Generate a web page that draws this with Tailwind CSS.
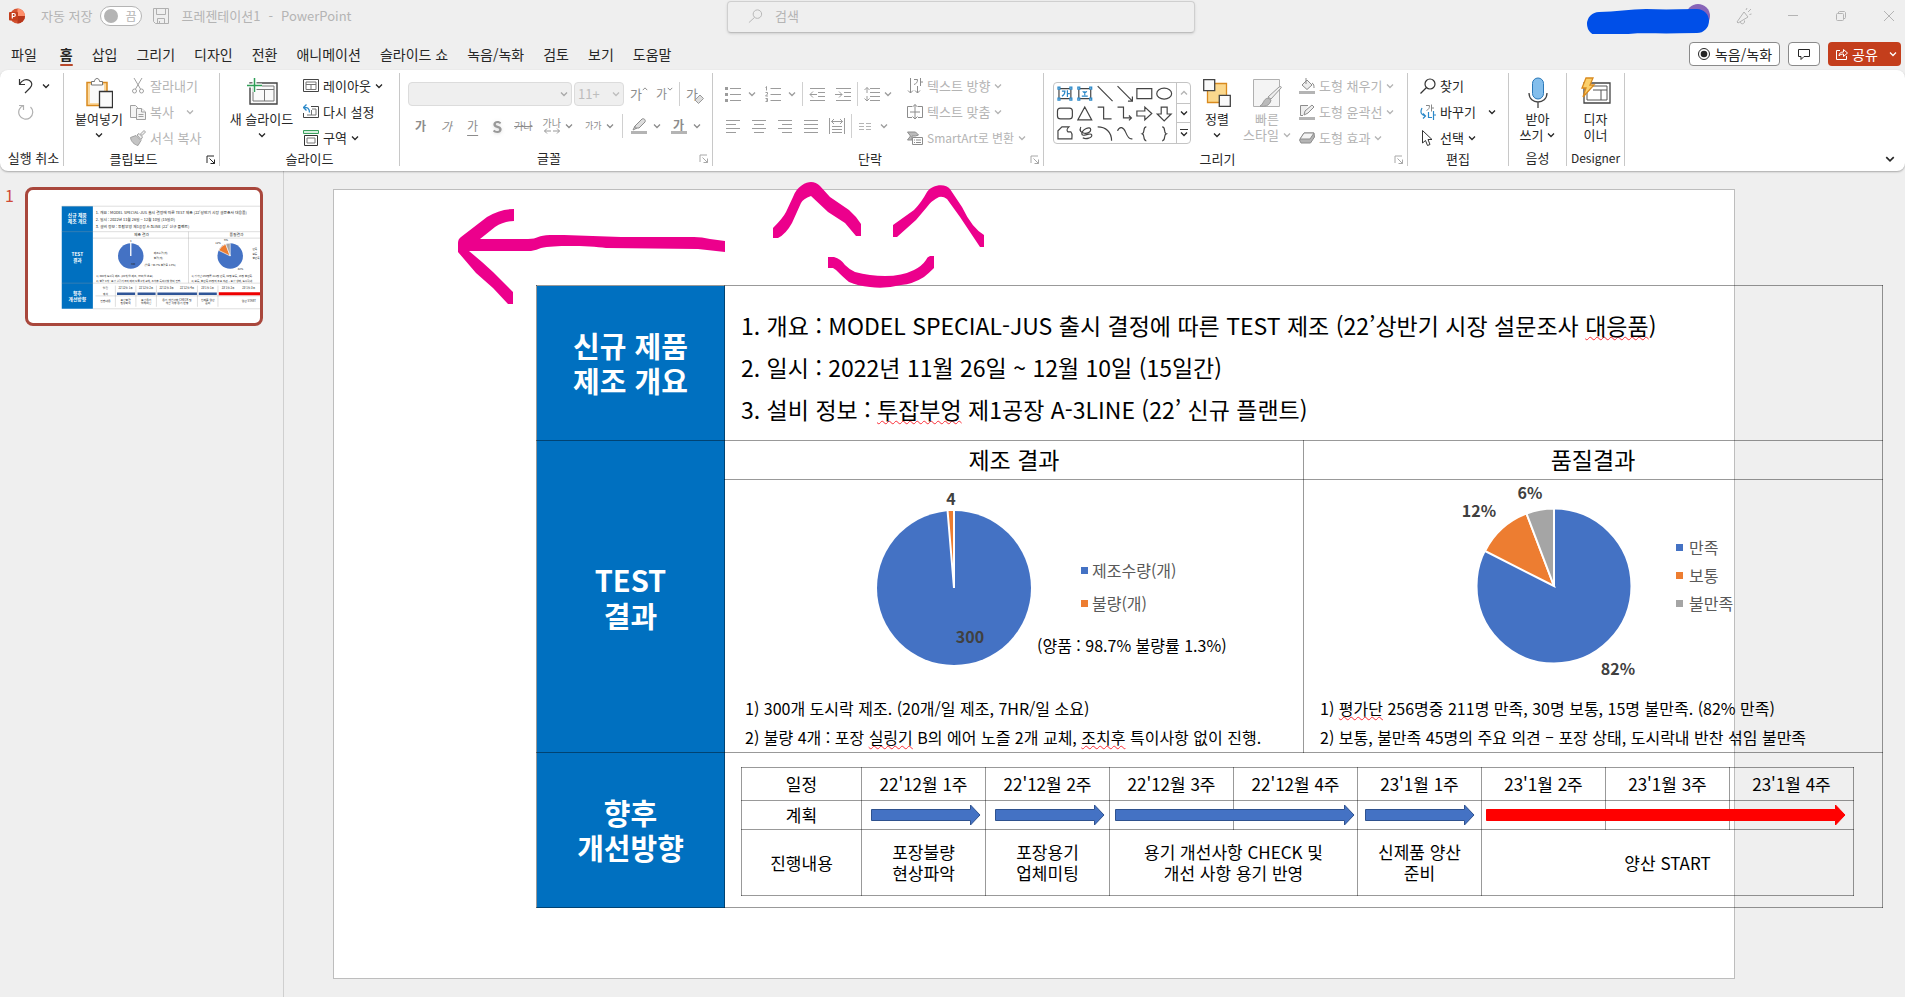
<!DOCTYPE html>
<html lang="ko">
<head>
<meta charset="utf-8">
<title>프레젠테이션1 - PowerPoint</title>
<script src="https://cdn.jsdelivr.net/npm/@tailwindcss/browser@4"></script>
</head>
<body class="flex h-screen flex-col overflow-hidden bg-[#efefef] font-['Noto_Sans_CJK_KR',sans-serif] text-[13px] leading-4 text-[#262626]">

<svg class="hidden">
  <symbol id="chev" viewBox="0 0 8 8"><path d="M1 2.500 4 5.500 7 2.500" fill="none" stroke="currentColor" stroke-width="1.300"/></symbol>
  <symbol id="launch" viewBox="0 0 10 10"><path d="M1 8V1h7M3.500 3.500 8.500 8.500M8.500 4.500v4h-4" fill="none" stroke="currentColor"/></symbol>
</svg>

<!-- Title bar -->
<header class="grid h-[34px] shrink-0 grid-cols-[727fr_468fr_710fr] text-[#b4b4b4]">
  <div class="flex h-8 items-center pl-[9px]">
    <svg class="size-4" viewBox="0 0 16 16"><circle cx="8.500" cy="8" r="7.500" fill="#d35230"/><path d="M8.500.5a7.500 7.500 0 0 1 7.500 7.500H8.500z" fill="#ff8f6b"/><path d="M8.500 15.500A7.500 7.500 0 0 0 16 8H8.500z" fill="#b7361b"/><rect y="4" width="9" height="8.500" rx="1" fill="#c43e1c"/><path d="M3.300 10.500v-5h1.500a1.500 1.500 0 0 1 0 3H3.300" fill="none" stroke="#fff" stroke-width="1.200"/></svg>
    <span class="ml-4">자동 저장</span>
    <button class="ml-2 flex h-5 w-[42px] items-center justify-between rounded-full border border-[#b4b4b4] bg-white px-[3px] text-[12px]"><i class="size-3.5 rounded-full bg-[#b4b4b4]"></i><span class="pr-0.5">끔</span></button>
    <button class="ml-[11px]" aria-label="저장"><svg class="size-4" viewBox="0 0 16 16" fill="none" stroke="#b0b0b0"><path d="M.5.5h15v15h-13l-2-2zM3.500.5v6h9v-6M4.500 15.500v-5h7v5M6.500 15v-2"/></svg></button>
    <span class="ml-3">프레젠테이션1<span class="px-2">-</span>PowerPoint</span>
  </div>
  <label class="mt-px flex h-8 items-center rounded border border-[#cfcfcf] border-b-[#bdbdbd] pl-5 pb-0.5 shadow-sm">
    <svg class="size-4" viewBox="0 0 16 16" fill="none" stroke="#b4b4b4"><circle cx="10" cy="6" r="4.500"/><path d="M7 9.500 1 15"/></svg>
    <input class="ml-3 w-full bg-transparent outline-none placeholder:text-[#b4b4b4]" placeholder="검색" aria-label="검색">
  </label>
  <div class="flex h-8 items-center justify-end">
    <svg class="-mb-1 h-8 w-[128px]" viewBox="0 0 128 32"><circle cx="114" cy="14" r="12" fill="#8764b8"/><path d="M15 22C40 22 40 19 62 19c25 1 30 0 51 0" fill="none" stroke="#004fe8" stroke-width="24" stroke-linecap="round"/></svg>
    <button class="ml-[23px]" aria-label="의견"><svg class="size-[18px]" viewBox="0 0 18 18" fill="none" stroke="#b4b4b4"><path d="M2 15 9 5l4 5-10 6zM5.500 15c0 3 5 2 4-1.500M11 3l1-2M13 5l3-3M14.500 7.500l2-.5"/></svg></button>
    <button class="ml-8" aria-label="최소화"><svg class="size-4" viewBox="0 0 16 16" stroke="#b4b4b4"><path d="M3 7.500h10"/></svg></button>
    <button class="ml-8" aria-label="이전 크기로"><svg class="size-4" viewBox="0 0 16 16" fill="none" stroke="#b4b4b4"><rect x="3.500" y="5.500" width="7" height="7" rx="1"/><path d="M5.500 5.500v-1.500l1-.5h5l1 1v5l-.5 1h-1.500"/></svg></button>
    <button class="mr-2 ml-8" aria-label="닫기"><svg class="size-4" viewBox="0 0 16 16" stroke="#b4b4b4"><path d="M3 3l10 10M13 3 3 13"/></svg></button>
  </div>
</header>

<!-- Tabs -->
<nav class="flex h-9 shrink-0 items-center pt-1 text-[14px]">
  <div class="flex flex-1 gap-[19px] pl-[11px] whitespace-nowrap">
    <a href="#">파일</a><a href="#" class="relative ml-1 font-bold">홈<i class="absolute inset-x-0 -bottom-1 h-0.5 rounded bg-[#b7472a]"></i></a><a href="#">삽입</a><a href="#">그리기</a><a href="#">디자인</a><a href="#">전환</a><a href="#">애니메이션</a><a href="#">슬라이드 쇼</a><a href="#">녹음/녹화</a><a href="#">검토</a><a href="#">보기</a><a href="#">도움말</a>
  </div>
  <div class="flex gap-2 pr-1">
    <button class="flex h-6 w-[91px] items-center justify-center gap-1 rounded border border-[#8a8a8a] bg-white"><svg class="size-3.5" viewBox="0 0 14 14"><circle cx="7" cy="7" r="5.500" fill="none" stroke="#262626"/><circle cx="7" cy="7" r="3.300" fill="#262626"/></svg>녹음/녹화</button>
    <button class="flex h-6 w-8 items-center justify-center rounded border border-[#8a8a8a] bg-white" aria-label="메모"><svg class="size-3" viewBox="0 0 12 12" fill="none" stroke="#262626"><path d="M.5 1.500h11v7H6l-3 3v-3H.5z"/></svg></button>
    <button class="flex h-6 w-[73px] items-center rounded bg-[#c43e1c] pl-2 text-white"><svg class="mr-1 size-3" viewBox="0 0 12 12" fill="none" stroke="#fff"><path d="M4 2.500H.5v9h10V8M3 8c0-3 2-4 4.500-4V1.500L11.500 5 7.500 8.500V6C5.500 6 4 6.500 3 8z"/></svg>공유<svg class="ml-auto mr-1 size-2"><use href="#chev"/></svg></button>
  </div>
</nav>

<!-- Ribbon -->
<section class="z-10 flex h-[101px] shrink-0 rounded-lg bg-white py-[3px] whitespace-nowrap shadow-[0_1px_2px_rgba(0,0,0,0.3)]">

  <div class="mb-0.5 flex w-16 flex-col border-r border-[#c8c8c8]">
    <div class="flex h-[79px] flex-col pl-[18px]">
      <div class="flex h-[26px] items-center gap-2"><button aria-label="실행 취소"><svg class="size-4" viewBox="0 0 16 16" fill="none" stroke="#333" stroke-width="1.200"><path d="M1.500 1v5.500H7M1.500 6.500C4 2 8 .5 11.500 2.500c3 2 3 5 .5 7.500l-5 5"/></svg></button><svg class="size-2"><use href="#chev"/></svg></div>
      <button class="flex h-[26px] items-center" aria-label="다시 실행"><svg class="size-4" viewBox="0 0 16 16" fill="none" stroke="#b0b0b0" stroke-width="1.200"><path d="M1 1.500h4.500V6M5.500 1.500A7 7 0 1 0 12.500 3"/></svg></button>
    </div>
    <p class="pl-1 text-center">실행 취소</p>
  </div>

  <div class="mb-0.5 flex w-[156px] flex-col border-r border-[#c8c8c8]">
    <div class="flex h-[79px]">
      <button class="flex w-[66px] flex-col items-center pt-1 pl-1"><svg class="h-8 w-7" viewBox="0 0 28 32" fill="none"><path d="M2 5.500h20v23H2z" fill="#fbd9a0" stroke="#d98a1e" stroke-width="1.500"/><path d="M5 8h14v18H5z" fill="#fafafa"/><path d="M6.500 8V4.500h3c0-4 5-4 5 0h3V8z" fill="#fff" stroke="#767676"/><path d="M14.500 14.500h13v16h-13z" fill="#fafafa" stroke="#333" stroke-width="1.300"/></svg><span class="mt-0.5">붙여넣기</span><svg class="mt-1 size-2"><use href="#chev"/></svg></button>
      <div class="flex flex-col text-[#b4b4b4]">
        <button class="flex h-[26px] items-center gap-1"><svg class="size-4" viewBox="0 0 16 16" fill="none" stroke="#a0a0a0"><path d="M4 0l6.500 11M12 0 5.500 11"/><circle cx="4.500" cy="13" r="2"/><circle cx="11.500" cy="13" r="2"/></svg>잘라내기</button>
        <button class="flex h-[26px] items-center gap-1"><svg class="size-4" viewBox="0 0 16 16" fill="#f4f4f4" stroke="#a0a0a0"><path d="M.5 1.500h5l2 2v10h-7z"/><path d="M6.500 4.500h5l4 3.500v7.500h-9z"/><path d="M11.500 4.500V8h4M8.500 10.500h5M8.500 12.500h5"/></svg>복사<svg class="ml-2 size-2"><use href="#chev"/></svg></button>
        <button class="flex h-[26px] items-center gap-1"><svg class="size-4" viewBox="0 0 16 16" fill="#c4c4c4" stroke="#a0a0a0"><path d="M.5 7.500 6 5.500l5 5-3 5c-4-1-7-4-7.500-8z"/><path d="M7 5l2-1.500 3.500 3.500-1.500 2.500zM10.500 4 14 .5 15.500 2 12 5.500z" fill="#eee"/></svg>서식 복사</button>
      </div>
    </div>
    <p class="relative pr-4 text-center">클립보드<svg class="absolute top-1 right-[3px] size-2.5"><use href="#launch"/></svg></p>
  </div>

  <div class="mb-0.5 flex w-[180px] flex-col border-r border-[#c8c8c8]">
    <div class="flex h-[79px]">
      <button class="flex w-[83px] flex-col items-center pt-1"><svg class="h-8 w-8" viewBox="0 0 32 32" fill="none"><path d="M4 6h27v21H4z" stroke="#444" stroke-width="1.400" fill="#fafafa"/><path d="M7 12.500h21M7 9h21v15H7zM18.500 12.500V24" stroke="#777"/><path d="M8.500 1v14M1 8.500h15" stroke="#fff" stroke-width="4"/><path d="M8.500 1v14M1 8.500h15" stroke="#2f9e57" stroke-width="1.500"/></svg><span class="mt-0.5">새 슬라이드</span><svg class="mt-1 size-2"><use href="#chev"/></svg></button>
      <div class="flex flex-col">
        <button class="flex h-[26px] items-center gap-1"><svg class="size-4" viewBox="0 0 16 16" fill="none" stroke="#444"><path d="M.5 1.500h15v12H.5z"/><path d="M3 4h10v7.500H3zM3 6.500h10M8 6.500v5" stroke="#777"/></svg>레이아웃<svg class="size-2"><use href="#chev"/></svg></button>
        <button class="flex h-[26px] items-center gap-1"><svg class="size-4" viewBox="0 0 16 16" fill="none" stroke="#444"><path d="M8 2.500h7.500v11H.5V9"/><path d="M9 5h4v6H4M8.500 6v5" stroke="#777"/><path d="M3.500.5.500 3.500l3 3M.5 3.500c4-.5 6 1 6 5" stroke="#2b88c8" stroke-width="1.300"/></svg>다시 설정</button>
        <button class="flex h-[26px] items-center gap-1"><svg class="size-4" viewBox="0 0 16 16" fill="none"><path d="M.5.5h15v3H.5z" stroke="#3aa05e" fill="#d8f0df"/><path d="M1.500 5.500h13v10h-13z" stroke="#333"/><path d="M4 8h8v5H4z" stroke="#777"/></svg>구역<svg class="size-2"><use href="#chev"/></svg></button>
      </div>
    </div>
    <p class="text-center">슬라이드</p>
  </div>

  <div class="mb-0.5 flex w-[313px] flex-col border-r border-[#c8c8c8]">
    <div class="flex h-[79px] flex-col gap-2 pt-[9px] pl-2 text-[#a8a8a8]">
      <div class="flex h-6 items-center">
        <button class="flex h-6 w-[164px] items-center justify-end rounded border border-[#dcdcdc] bg-[#efefef] pr-[3px]" aria-label="글꼴"><svg class="size-2"><use href="#chev"/></svg></button>
        <button class="ml-0.5 flex h-6 w-[50px] items-center justify-between rounded border border-[#dcdcdc] bg-[#efefef] px-[3px] text-[#bdbdbd]">11+<svg class="size-2"><use href="#chev"/></svg></button>
        <button class="ml-1.5 flex items-start text-[13px] text-[#8c8c8c]">가<svg class="size-1.5 rotate-180"><use href="#chev"/></svg></button>
        <button class="ml-2 flex items-start text-[12px] text-[#8c8c8c]">가<svg class="size-1.5"><use href="#chev"/></svg></button>
        <i class="mx-1.5 h-6 w-px bg-[#d0d0d0]"></i>
        <button class="relative text-[13px] text-[#8c8c8c]">가<svg class="absolute top-2 left-2 size-2.5" viewBox="0 0 10 10"><path d="M1 6 6 1l3.500 3.500-5 5z" fill="#ddd" stroke="#999"/></svg></button>
      </div>
      <div class="flex h-6 items-center text-[12px] text-[#8c8c8c]">
        <button class="ml-[7px] font-bold">가</button>
        <button class="ml-[15px] italic">가</button>
        <button class="ml-[15px] underline underline-offset-4">가</button>
        <button class="ml-3.5 text-[16px] font-bold text-[#999] drop-shadow">S</button>
        <button class="ml-3 text-[10px] line-through">가나</button>
        <button class="ml-2.5 flex flex-col items-center text-[10px] leading-[10px]">가나<svg class="h-1.5 w-4" viewBox="0 0 16 6" fill="none" stroke="#999"><path d="M3 .5.500 3 3 5.500M.5 3H7M13 .5l2.500 2.500L13 5.500M15.500 3H9"/></svg></button>
        <svg class="ml-1 size-2"><use href="#chev"/></svg>
        <button class="ml-3 text-[9px]">가가</button>
        <svg class="ml-1 size-2"><use href="#chev"/></svg>
        <i class="mx-2 h-6 w-px bg-[#d0d0d0]"></i>
        <button aria-label="강조 색"><svg class="size-4" viewBox="0 0 16 16"><path d="M0 13h16v3H0z" fill="#b4b4b4"/><path d="M4 8 11 1c2-1 4 1 3 3L8 10H4zM4 8l-2 4 4-2" fill="#ddd" stroke="#8c8c8c"/></svg></button>
        <svg class="ml-1.5 size-2"><use href="#chev"/></svg>
        <button class="ml-2.5 w-4 border-b-[3px] border-[#b4b4b4] leading-[13px] font-bold">가</button>
        <svg class="ml-1.5 size-2"><use href="#chev"/></svg>
      </div>
    </div>
    <p class="relative pr-3.5 text-center">글꼴<svg class="absolute top-1 right-[3px] size-2.5 text-[#a8a8a8]"><use href="#launch"/></svg></p>
  </div>

  <div class="mb-0.5 flex w-[331px] flex-col border-r border-[#c8c8c8]">
    <div class="flex h-[79px] text-[#9c9c9c]">
      <div class="flex w-[194px] flex-col gap-2 pt-[9px] pl-3">
        <div class="flex h-6 items-center">
          <button aria-label="글머리 기호"><svg class="size-4" viewBox="0 0 16 16" stroke="currentColor"><path d="M5 2.500h11M5 8.500h11M5 14.500h11"/><path d="M0 2.500h3M0 8.500h3M0 14.500h3" stroke-width="3"/></svg></button>
          <svg class="ml-[7px] size-2"><use href="#chev"/></svg>
          <button class="ml-[9px]" aria-label="번호 매기기"><svg class="size-4" viewBox="0 0 16 16" fill="none" stroke="currentColor"><path d="M5.500 2.500H16M5.500 8.500H16M5.500 14.500H16M.5 1.500l1-1v4M.5 6.500h2v1.500l-2 2h2.500M.5 12.500h2v3H.5M1 14h1"/></svg></button>
          <svg class="ml-[7px] size-2"><use href="#chev"/></svg>
          <i class="mx-1.5 h-6 w-px bg-[#d0d0d0]"></i>
          <button aria-label="내어쓰기"><svg class="size-4" viewBox="0 0 16 16" fill="none" stroke="currentColor"><path d="M1 2.500h15M9 6.500h7M9 10.500h7M1 14.500h15M4 5.500l-3 3 3 3M1 8.500h7"/></svg></button>
          <button class="ml-2.5" aria-label="들여쓰기"><svg class="size-4" viewBox="0 0 16 16" fill="none" stroke="currentColor"><path d="M1 2.500h15M9 6.500h7M9 10.500h7M1 14.500h15M4 5.500l3 3-3 3M0 8.500h7"/></svg></button>
          <i class="mx-1.5 h-6 w-px bg-[#d0d0d0]"></i>
          <button aria-label="줄 간격"><svg class="size-4" viewBox="0 0 16 16" fill="none" stroke="currentColor"><path d="M6 2.500h10M6 6.500h10M6 10.500h10M6 14.500h10M.5 4 3 1.500 5.500 4M3 1.500V7M.5 12.500 3 15l2.500-2.500M3 15v-5"/></svg></button>
          <svg class="ml-1 size-2"><use href="#chev"/></svg>
        </div>
        <div class="flex h-6 items-center">
          <button aria-label="왼쪽 맞춤"><svg class="size-4" viewBox="0 0 16 16" stroke="currentColor"><path d="M1 2.500h14M1 6.500h10M1 10.500h14M1 14.500h10"/></svg></button>
          <button class="ml-2.5" aria-label="가운데 맞춤"><svg class="size-4" viewBox="0 0 16 16" stroke="currentColor"><path d="M1 2.500h14M3 6.500h10M1 10.500h14M3 14.500h10"/></svg></button>
          <button class="ml-2.5" aria-label="오른쪽 맞춤"><svg class="size-4" viewBox="0 0 16 16" stroke="currentColor"><path d="M1 2.500h14M5 6.500h10M1 10.500h14M5 14.500h10"/></svg></button>
          <button class="ml-2.5" aria-label="양쪽 맞춤"><svg class="size-4" viewBox="0 0 16 16" stroke="currentColor"><path d="M1 2.500h14M1 6.500h14M1 10.500h14M1 14.500h14"/></svg></button>
          <button class="ml-2.5" aria-label="균등 분할"><svg class="size-4" viewBox="0 0 16 16" fill="none" stroke="currentColor"><path d="M.5 0v16M15.500 0v16M3 8.500h10M3 11.500h10M3 14.500h10M5 1 2.500 3.500 5 6M11 1l2.500 2.500L11 6M2.500 3.500h11"/></svg></button>
          <i class="mx-1.5 h-6 w-px bg-[#d0d0d0]"></i>
          <button aria-label="열"><svg class="h-4 w-3.5" viewBox="0 0 14 16" stroke="#b4b4b4"><path d="M1 5.500h5M8 5.500h5M1 8.500h5M8 8.500h5M1 11.500h5M8 11.500h5"/></svg></button>
          <svg class="ml-2 size-2"><use href="#chev"/></svg>
        </div>
      </div>
      <div class="flex flex-col text-[#b4b4b4]">
        <button class="flex h-[26px] items-center gap-1"><svg class="size-4 text-[#8c8c8c]" viewBox="0 0 16 16" fill="none" stroke="currentColor"><path d="M3.500 0v15M1 12.500 3.500 15 6 12.500M10.500 8v7M8 12.500l2.500 2.500 2.500-2.500M7 1.500h3.500c0 3-1 4-3.500 5M13.500 0v8M13.500 4H16"/></svg>텍스트 방향<svg class="size-2"><use href="#chev"/></svg></button>
        <button class="flex h-[26px] items-center gap-1"><svg class="size-4 text-[#8c8c8c]" viewBox="0 0 16 16" fill="none" stroke="currentColor"><path d="M5 2.500H.5v11H5M11 2.500h4.500v11H11M3 8h10M8 .5V15M5.500 3 8 .5 10.500 3M5.500 12.500 8 15l2.500-2.500"/></svg>텍스트 맞춤<svg class="size-2"><use href="#chev"/></svg></button>
        <button class="flex h-[26px] items-center gap-1"><svg class="size-4 text-[#8c8c8c]" viewBox="0 0 16 16"><path d="M.5 2h8l3 3-3 1H5v4H.5L3.500 6z" fill="#bbb" stroke="currentColor"/><path d="M5.500 7.500h10v7h-10z" fill="#fff" stroke="currentColor"/><path d="M7 10h1M9 10h5M7 12.500h1M9 12.500h5" stroke="currentColor"/></svg><span class="text-[12px]">SmartArt로 변환</span><svg class="size-2"><use href="#chev"/></svg></button>
      </div>
    </div>
    <p class="relative pr-4 text-center">단락<svg class="absolute top-1 right-[3px] size-2.5 text-[#a8a8a8]"><use href="#launch"/></svg></p>
  </div>

  <div class="mb-0.5 flex w-[364px] flex-col border-r border-[#c8c8c8]">
    <div class="flex h-[79px]">
      <div class="mt-[9px] ml-[9px] flex h-[62px] w-[138px] rounded border border-[#c4c4c4]">
        <svg class="h-[60px] w-[123px]" viewBox="0 0 123 60" fill="none" stroke="#444" stroke-width="1.200">
          <g stroke="#2b88c8"><path d="M5 5.500h12M5 15.500h12M5 5.500v10M17 5.500v10M25 5.500h12M25 15.500h12M25 5.500v10M37 5.500v10" stroke="#444"/><path d="M4 4h2v2H4zM16 4h2v2h-2zM4 15h2v2H4zM16 15h2v2h-2zM24 4h2v2h-2zM36 4h2v2h-2zM24 15h2v2h-2zM36 15h2v2h-2z" fill="#fff"/><path d="M8 8h3c0 3-1 4-3 5M13.500 7v7M13.500 10.500H16M28 13h6M31 8v4M29 8c1 2 3 2 4 0"/></g>
          <path d="M44 3l15 15M64 3l15 15M79 13.500V18h-4.500M83.500 5.500h15v10h-15z"/><ellipse cx="111" cy="10.500" rx="7.500" ry="5.500"/>
          <rect x="3.500" y="25" width="15" height="11" rx="3"/><path d="M31 24l7 13H24zM44 24h6v12h8M64 24h6v11h8M75.500 32.500 78 35l-2.500 2.500M83.500 28h8v-4l7 6.500-7 6.500v-4h-8zM108 24v7h-4l7 7 7-7h-4v-7z"/>
          <path d="M4 56V48l4-4h7c-3 3-2 4-1 5h3c2 2 1 4 1 7zM27 44c-4 8 10 8 10 3s-9 0-9 4 9-2 10 1-6 5-9 3M44 44c8 0 14 5 14 14M64 48c2-5 6-4 8 1s4 8 7 7M93 44c-4 0-1 6-4 7 3 1 0 7 4 7M109 44c4 0 1 6 4 7-3 1 0 7-4 7"/>
        </svg>
        <div class="flex w-[14px] flex-col border-l border-[#c4c4c4]"><button class="flex h-5 items-center justify-center text-[#b4b4b4]" aria-label="위로"><svg class="size-2 rotate-180"><use href="#chev"/></svg></button><button class="flex h-5 items-center justify-center border-y border-[#c4c4c4]" aria-label="아래로"><svg class="size-2"><use href="#chev"/></svg></button><button class="flex h-5 flex-col items-center justify-center" aria-label="자세히"><i class="h-px w-2 bg-[#333]"></i><svg class="size-2"><use href="#chev"/></svg></button></div>
      </div>
      <button class="ml-2 flex w-9 flex-col items-center pt-1.5"><svg class="h-7 w-7" viewBox="0 0 28 28" stroke-width="1.300"><path d="M4.500 4.500h19v19h-19z" fill="#fbd88d" stroke="#d98a1e"/><path d="M.7.7h11v11H.7zM16.300 16.300h11v11h-11z" fill="#fafafa" stroke="#444"/></svg><span class="mt-1">정렬</span><svg class="mt-1 size-2"><use href="#chev"/></svg></button>
      <button class="ml-1.5 flex w-[52px] flex-col items-center pt-1.5 text-[#b4b4b4]"><svg class="h-7 w-8" viewBox="0 0 32 28"><path d="M2.500.5h26v27h-26z" fill="#f4f4f4" stroke="#b0b0b0"/><path d="M30 9 20 20l-3-2L28 8c2-1 3 0 2 1z" fill="#eee" stroke="#999"/><path d="M9 27c4 1 10 0 11-6l-3-2c-5 1-4 6-8 8z" fill="#bbb" stroke="#999"/></svg><span class="mt-1">빠른</span><span class="flex items-center gap-1">스타일<svg class="size-2"><use href="#chev"/></svg></span></button>
      <div class="ml-1.5 flex flex-col text-[#b4b4b4]">
        <button class="flex h-[26px] items-center gap-1"><svg class="size-4" viewBox="0 0 16 16"><path d="M0 13h16v3H0z" fill="#b4b4b4"/><path d="M3 7l5-5 5 5-5 4.500zM7 0v6M13 5c2 1 2 3 2 5" fill="#eee" stroke="#8c8c8c"/></svg>도형 채우기<svg class="size-2"><use href="#chev"/></svg></button>
        <button class="flex h-[26px] items-center gap-1"><svg class="size-4" viewBox="0 0 16 16"><path d="M0 13h16v3H0z" fill="#b4b4b4"/><path d="M9 1.500H1.500v10H4M5 11l1-4 7-6 2 2-6 6z" fill="#eee" stroke="#8c8c8c"/></svg>도형 윤곽선<svg class="size-2"><use href="#chev"/></svg></button>
        <button class="flex h-[26px] items-center gap-1"><svg class="size-4" viewBox="0 0 16 16"><path d="M5 3h10l.5 4-4 6H2L.5 10z" fill="#b4b4b4" stroke="#8c8c8c"/><path d="M5 3h10l-4 6H1z" fill="#f4f4f4" stroke="#8c8c8c"/></svg>도형 효과<svg class="size-2"><use href="#chev"/></svg></button>
      </div>
    </div>
    <p class="relative pr-4 text-center">그리기<svg class="absolute top-1 right-[3px] size-2.5 text-[#a8a8a8]"><use href="#launch"/></svg></p>
  </div>

  <div class="mb-0.5 flex w-[101px] flex-col border-r border-[#c8c8c8]">
    <div class="flex h-[79px] flex-col pl-3">
      <button class="flex h-[26px] items-center gap-1"><svg class="size-4" viewBox="0 0 16 16" fill="none" stroke="#333" stroke-width="1.200"><circle cx="10" cy="6" r="5"/><path d="M6.500 9.500.5 15.500"/></svg>찾기</button>
      <button class="flex h-[26px] items-center gap-1"><svg class="size-4" viewBox="0 0 16 16" fill="none"><path d="M6 1.500h3.500c0 3-1 4-3 5M11.500.5v7M11.500 4H14" stroke="#888"/><path d="M2 4C0 8 1 11 5 12M3 9.500 5.500 12 3 14.500M8.500 8v5.500H12M13.500 7v9M13.500 11H16" stroke="#2b88c8" stroke-width="1.200"/></svg>바꾸기<svg class="ml-2 size-2"><use href="#chev"/></svg></button>
      <button class="flex h-[26px] items-center gap-1"><svg class="size-4" viewBox="0 0 16 16" fill="none" stroke="#333"><path d="M2.500.5v12.500l3-2.500 2 5 2.500-1-2-5h4z"/></svg>선택<svg class="size-2"><use href="#chev"/></svg></button>
    </div>
    <p class="text-center">편집</p>
  </div>

  <div class="mb-0.5 flex w-[58px] flex-col border-r border-[#c8c8c8]">
    <button class="flex h-[79px] flex-col items-center pt-1"><svg class="h-8 w-5" viewBox="0 0 20 32" fill="none"><rect x="4.500" y="1" width="11" height="21" rx="5.500" fill="#83beec" stroke="#2b78b8"/><path d="M1 16c0 12 18 12 18 0M10 25v6" stroke="#444" stroke-width="1.300"/></svg><span class="mt-0.5">받아</span><span class="flex items-center gap-1">쓰기<svg class="size-2"><use href="#chev"/></svg></span></button>
    <p class="text-center">음성</p>
  </div>

  <div class="mb-0.5 flex w-[58px] flex-col border-r border-[#c8c8c8]">
    <button class="flex h-[79px] flex-col items-center pt-1"><svg class="h-8 w-8" viewBox="0 0 32 32" fill="none"><path d="M4 6h26v20H4z" stroke="#444" stroke-width="1.300"/><path d="M7 9h20v14H7zM13 13h14M21 13v10" stroke="#555"/><path d="M6 1h7l-3 7h4L3 20l3-9H2z" fill="#fbd06c" stroke="#d98a1e" stroke-width="1.300"/></svg><span class="mt-0.5">디자</span><span>이너</span></button>
    <p class="text-center text-[12px]">Designer</p>
  </div>
  <button class="mr-2.5 mb-1 ml-auto self-end" aria-label="리본 축소"><svg class="size-2.5"><use href="#chev"/></svg></button>
</section>

<main class="flex min-h-0 flex-1">
  <!-- Slide list -->
  <aside class="flex w-[284px] shrink-0 items-start border-r border-[#cfcfcf] pt-4 pl-[5px]">
    <span class="w-5 text-[16px] text-[#d04a35]">1</span>
    <svg class="h-[139px] w-[238px] rounded-lg border-[3px] border-[#a9473c] bg-white" viewBox="0 0 1402 800" font-size="23" fill="#222">
      <path d="M204 96h188v620H204z" fill="#0070c0"/>
      <path d="M204 96h1200M204 250h1200M392 289h1012M204 561h1200M392 716h1012M970 250v311M408 638h1000M528 576v128M652 576v128M776 576v128M1024 576v128M1148 576v128" stroke="#999" stroke-width="2"/>
      <g fill="#fff" font-size="29" font-weight="700" text-anchor="middle"><text x="298" y="164">신규 제품</text><text x="298" y="198">제조 개요</text><text x="298" y="398">TEST</text><text x="298" y="434">결과</text><text x="298" y="632">향후</text><text x="298" y="668">개선방향</text></g>
      <text x="409" y="144">1. 개요 : MODEL SPECIAL-JUS 출시 결정에 따른 TEST 제조 (22’상반기 시장 설문조사 대응품)</text><text x="409" y="186">2. 일시 : 2022년 11월 26일 ~ 12월 10일 (15일간)</text><text x="409" y="228">3. 설비 정보 : 투잡부엉 제1공장 A-3LINE (22’ 신규 플랜트)</text>
      <text x="640" y="278">제조 결과</text><text x="1218" y="278">품질결과</text>
      <circle cx="621" cy="397" r="77" fill="#4472c4"/><path d="M621 397v-80" stroke="#fff" stroke-width="8"/><circle cx="1222" cy="397" r="77" fill="#4472c4"/><path d="M1222 397 1153 363A77 77 0 0 1 1195 325z" fill="#ed7d31" stroke="#fff" stroke-width="4"/><path d="M1222 397 1195 325A77 77 0 0 1 1222 320z" fill="#a5a5a5" stroke="#fff" stroke-width="4"/>
      <g font-size="16"><text x="617" y="315">4</text><text x="622" y="452">300</text><text x="760" y="386">제조수량(개)</text><text x="760" y="418">불량(개)</text><text x="704" y="460">(양품 : 98.7% 불량률 1.3%)</text><text x="413" y="523">1) 300개 도시락 제조. (20개/일 제조, 7HR/일 소요)</text><text x="413" y="552">2) 불량 4개 : 포장 실링기 B의 에어 노즐 2개 교체, 조치후 특이사항 없이 진행.</text><text x="1132" y="326">12%</text><text x="1184" y="308">6%</text><text x="1268" y="484">82%</text><text x="1356" y="363">만족</text><text x="1356" y="391">보통</text><text x="1356" y="418">불만족</text><text x="988" y="523">1) 평가단 256명중 211명 만족, 30명 보통, 15명 불만족.</text><text x="988" y="552">2) 보통, 불만족 45명의 주요 의견 – 포장 상태, 도시락내</text></g>
      <g font-size="17" text-anchor="middle"><text x="468" y="598">일정</text><text x="590" y="598">22'12월 1주</text><text x="714" y="598">22'12월 2주</text><text x="838" y="598">22'12월 3주</text><text x="962" y="598">22'12월 4주</text><text x="1086" y="598">23'1월 1주</text><text x="1210" y="598">23'1월 2주</text><text x="1334" y="598">23'1월 3주</text><text x="468" y="630">계획</text><text x="468" y="678">진행내용</text><text x="590" y="668">포장불량</text><text x="590" y="690">현상파악</text><text x="714" y="668">포장용기</text><text x="714" y="690">업체미팅</text><text x="900" y="668">용기 개선사항 CHECK 및</text><text x="900" y="690">개선 사항 용기 반영</text><text x="1086" y="668">신제품 양산</text><text x="1086" y="690">준비</text><text x="1334" y="678">양산 START</text></g>
      <path d="M538 625h109M662 625h109M782 625h239M1032 625h109" stroke="#2f5597" stroke-width="16"/><path d="M1153 625h250" stroke="#e00" stroke-width="18"/>
    </svg>
  </aside>

  <!-- Slide canvas -->
  <section class="relative flex-1 overflow-hidden text-black">
    <div class="absolute top-[18px] left-[49px] h-[790px] w-[1402px] border border-[#bdbdbd] bg-white"></div>

    <table class="absolute top-[114px] left-[252px] w-[1346px] table-fixed border-collapse">
      <colgroup><col class="w-[188px]"><col class="w-[579px]"><col class="w-[579px]"></colgroup>
      <tbody>
      <tr class="h-[155px]">
        <th class="border border-black/40 bg-[#0070c0] text-[29px] leading-[35px] text-white">신규 제품<br>제조 개요</th>
        <td colspan="2" class="border border-black/40 pt-2 pl-4 text-[23px] leading-[42px]">
          <p>1. 개요 : MODEL SPECIAL-JUS 출시 결정에 따른 TEST 제조 (22’상반기 시장 설문조사 <span class="underline decoration-red-500 decoration-wavy decoration-1">대응품</span>)</p>
          <p>2. 일시 : 2022년 11월 26일 ~ 12월 10일 (15일간)</p>
          <p>3. 설비 정보 : <span class="underline decoration-red-500 decoration-wavy decoration-1">투잡부엉</span> 제1공장 A-3LINE (22’ 신규 플랜트)</p>
        </td>
      </tr>
      <tr class="h-[39px] text-[23px] leading-8">
        <th rowspan="2" class="border border-black/40 bg-[#0070c0] text-[29px] leading-[36px] text-white">TEST<br>결과</th>
        <td class="border border-black/40 pb-0.5 text-center">제조 결과</td>
        <td class="border border-black/40 pb-0.5 text-center">품질결과</td>
      </tr>
      <tr class="h-[273px]">
        <td class="border border-black/40 align-top">
          <figure class="relative flex h-[214px] text-[16px]">
            <svg class="h-[213px] w-[356px] shrink-0" viewBox="0 0 356 213" font-size="16" font-weight="700" fill="#404040" text-anchor="middle">
              <circle cx="229" cy="108" r="77" fill="#4472c4"/>
              <path d="M229 108 222.500 30h6.500z" fill="#ed7d31" stroke="#fff" stroke-width="2"/>
              <text x="226" y="25">4</text><text x="245" y="163">300</text>
            </svg>
            <ul class="pt-[74px] leading-[33px] text-[#595959]">
              <li class="flex items-center gap-1"><i class="size-[7px] bg-[#4472c4]"></i>제조수량(개)</li>
              <li class="flex items-center gap-1"><i class="size-[7px] bg-[#ed7d31]"></i>불량(개)</li>
            </ul>
            <figcaption class="absolute top-[153px] left-[312px] leading-6">(양품 : 98.7% 불량률 1.3%)</figcaption>
          </figure>
          <div class="pl-5 text-[16px] leading-[29px]">
            <p>1) 300개 도시락 제조. (20개/일 제조, 7HR/일 소요)</p>
            <p>2) 불량 4개 : 포장 <span class="underline decoration-red-500 decoration-wavy decoration-1">실링기</span> B의 에어 노즐 2개 교체, <span class="underline decoration-red-500 decoration-wavy decoration-1">조치후</span> 특이사항 없이 진행.</p>
          </div>
        </td>
        <td class="border border-black/40 align-top">
          <figure class="flex h-[214px] text-[16px]">
            <svg class="h-[213px] w-[372px] shrink-0" viewBox="0 0 372 213" font-size="16" font-weight="700" fill="#404040" text-anchor="middle">
              <g stroke="#fff" stroke-width="2"><circle cx="250" cy="106" r="77.500" fill="#4472c4"/>
              <path d="M250 106 181 71A77.500 77.500 0 0 1 222.500 33.500z" fill="#ed7d31"/>
              <path d="M250 106 222.500 33.500A77.500 77.500 0 0 1 250 28.500z" fill="#a5a5a5"/></g>
              <text x="175" y="37">12%</text><text x="226" y="19">6%</text><text x="314" y="195">82%</text>
            </svg>
            <ul class="pt-[53px] leading-7 text-[#595959]">
              <li class="flex items-center gap-1.5"><i class="size-[7px] bg-[#4472c4]"></i>만족</li>
              <li class="flex items-center gap-1.5"><i class="size-[7px] bg-[#ed7d31]"></i>보통</li>
              <li class="flex items-center gap-1.5"><i class="size-[7px] bg-[#a5a5a5]"></i>불만족</li>
            </ul>
          </figure>
          <div class="pl-4 text-[16px] leading-[29px]">
            <p>1) <span class="underline decoration-red-500 decoration-wavy decoration-1">평가단</span> 256명중 211명 만족, 30명 보통, 15명 불만족. (82% 만족)</p>
            <p>2) 보통, 불만족 45명의 주요 의견 – 포장 상태, 도시락내 반찬 섞임 불만족</p>
          </div>
        </td>
      </tr>
      <tr class="h-[155px]">
        <th class="border border-black/40 bg-[#0070c0] text-[29px] leading-[35px] text-white">향후<br>개선방향</th>
        <td colspan="2" class="border border-black/40 pt-0.5 pl-4">
          <div class="relative w-[1113px]">
            <table class="w-full table-fixed border-collapse text-center text-[17px] leading-[21px] [&_td]:border [&_td]:border-black/40 [&_th]:border [&_th]:border-black/40 [&_th]:font-normal">
              <colgroup><col class="w-[120px]"></colgroup>
              <tr class="h-[33px]"><th>일정</th><th>22'12월 1주</th><th>22'12월 2주</th><th>22'12월 3주</th><th>22'12월 4주</th><th>23'1월 1주</th><th>23'1월 2주</th><th>23'1월 3주</th><th>23'1월 4주</th></tr>
              <tr class="h-[29px]"><th>계획</th><td></td><td></td><td></td><td></td><td></td><td></td><td></td><td></td></tr>
              <tr class="h-[66px]"><th>진행내용</th><td>포장불량<br>현상파악</td><td>포장용기<br>업체미팅</td><td colspan="2">용기 개선사항 CHECK 및<br>개선 사항 용기 반영</td><td>신제품 양산<br>준비</td><td colspan="3">양산 START</td></tr>
            </table>
            <svg class="absolute inset-0 h-[128px] w-[1113px]" viewBox="0 0 1113 128" fill="#4472c4" stroke="#2f528f">
              <path d="M130.500 42.500h99v-4.500l9.500 10-9.500 10v-4.500h-99zM254.500 42.500h99v-4.500l9.500 10-9.500 10v-4.500h-99zM374.500 42.500h229v-4.500l9.500 10-9.500 10v-4.500h-229zM624.500 42.500h99v-4.500l9.500 10-9.500 10v-4.500h-99z"/>
              <path d="M745.500 42.500h349v-4.500l9.500 10-9.500 10v-4.500h-349z" fill="red" stroke="red"/>
            </svg>
          </div>
        </td>
      </tr>
      </tbody>
    </table>

    <!-- Ink strokes -->
    <svg class="pointer-events-none absolute top-0 left-0 h-[150px] w-[760px]" viewBox="284 171 760 150" fill="#ec008c">
      <path d="M514 209Q500 209 487 217L461 237Q458 239 458 243V252L476 273 493 288 508 304H513V292L493 272 482 262 469 251H531Q537 250 541 248C556 245 590 246 606 248L698 249 725 252V241L710 239Q702 237 694 237H621L564 235H550C538 235 538 239 528 239H480L495 227Q504 221 514 221z"/>
      <path d="M773 228Q783 218 786 212L793 197C797 186 806 182 811 182Q816 182 820 186L830 197 849 210Q856 216 861 224V236H856L845 223 828 212 811 196Q803 199 801 203L792 223Q786 234 778 238H773z"/>
      <path d="M893 225 914 210Q921 203 927 192C932 184 946 183 950 189L962 207Q972 228 984 235V247H980L960 217 947 199Q943 196 939 197 931 201 927 207L916 220 897 237H893z"/>
      <path d="M828 257H834Q841 259 845 265 850 270 855 272 870 276 885 276 902 276 914 270 922 266 926 260 927 257 930 256H934V268Q929 273 924 277 913 284 901 285 885 289 870 287 858 286 849 282 844 278 836 270L833 268H828z"/>
    </svg>
  </section>
</main>
</body>
</html>
